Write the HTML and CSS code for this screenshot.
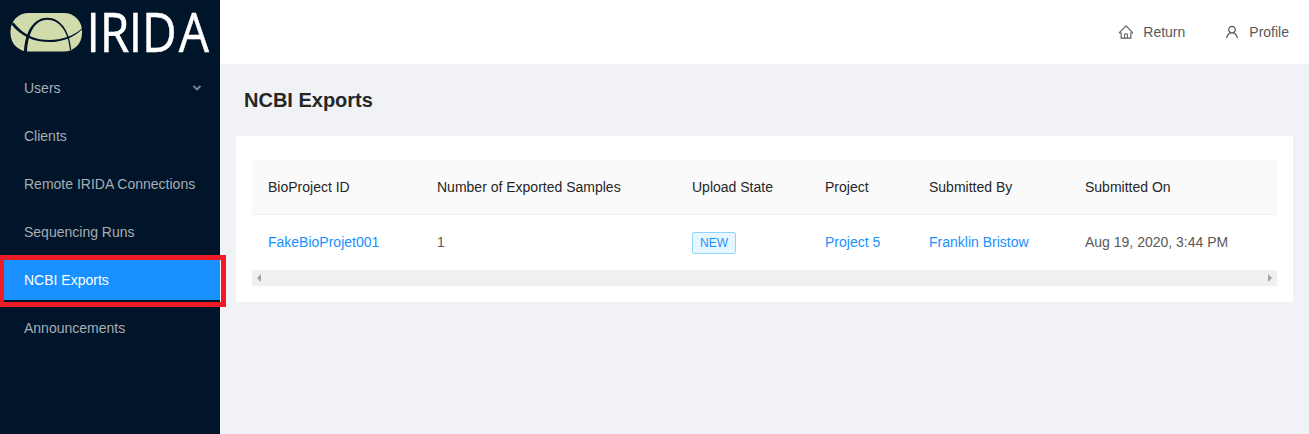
FILE: index.html
```html
<!DOCTYPE html>
<html lang="en">
<head>
<meta charset="utf-8">
<title>NCBI Exports</title>
<link rel="stylesheet" href="styles.css">
</head>
<body>
<div class="layout">
  <aside class="sidebar">
    <svg class="logo" viewBox="0 0 220 64" role="img" aria-label="IRIDA">
      <rect class="logo-badge" x="10.5" y="13" width="71.5" height="38.5" rx="18"/>
      <path class="logo-arc" d="M13.300 22.2C24 35.500 36 40 49.500 40C62 40 73 36 82 28.500L82 29.500C73 37.900 62 42.100 49.500 42.100C34 42.100 21 36.500 11.500 24.500Z"/>
      <path class="logo-arc" d="M24 52C25 31 34 17.800 47.500 17.800C60 17.800 69.500 30 71.200 50L70 50C68.200 31 59 19.800 47.500 19.800C36 19.800 28 31 27 52Z"/>
      <text class="logo-text" transform="scale(.87 1)" y="51.700" x="99.300 114.700 147.900 163.300 205.500">IRIDA</text>
    </svg>
    <nav class="menu">
      <a class="menu-item">Users
        <svg class="chevron" viewBox="0 0 10 10"><path d="M1.500 2.800L5 6.300L8.500 2.800"/></svg>
      </a>
      <a class="menu-item">Clients</a>
      <a class="menu-item">Remote IRIDA Connections</a>
      <a class="menu-item">Sequencing Runs</a>
      <a class="menu-item selected">NCBI Exports<span class="highlight"></span></a>
      <a class="menu-item">Announcements</a>
    </nav>
  </aside>
  <div class="main">
    <header class="topbar">
      <a class="top-link"><svg class="icon" viewBox="0 0 1024 1024"><path d="M946.5 505L560.1 118.8l-25.9-25.9a31.5 31.5 0 00-44.400 0L77.500 505a63.900 63.900 0 00-18.800 46c.4 35.200 29.700 63.300 64.900 63.300h42.500V940h691.800V614.300h43.400c17.100 0 33.200-6.700 45.300-18.800a63.600 63.600 0 0018.700-45.300c0-17-6.700-33.100-18.800-45.200zM568 868H456V664h112v204zm217.900-325.700V868H632V640c0-22.100-17.900-40-40-40H432c-22.100 0-40 17.900-40 40v228H238.100V542.300h-96l370-369.700 23.100 23.100L882 542.300h-96.100z"/></svg>Return</a>
      <a class="top-link"><svg class="icon" viewBox="0 0 1024 1024"><path d="M858.500 763.600a374 374 0 00-80.600-119.500 375.630 375.630 0 00-119.500-80.600c-.4-.2-.8-.3-1.200-.5C719.500 518 760 444.700 760 362c0-137-111-248-248-248S264 225 264 362c0 82.700 40.500 156 102.800 201.100-.4.2-.8.3-1.200.5-44.800 18.900-85 46-119.500 80.600a375.630 375.630 0 00-80.600 119.500A371.700 371.700 0 00136 901.800a8 8 0 008 8.200h60c4.400 0 7.900-3.500 8-7.800 2-77.200 33-149.500 87.800-204.300 56.700-56.700 132-87.900 212.200-87.900s155.500 31.200 212.200 87.900C779 752.700 810 825 812 902.200c.1 4.400 3.600 7.800 8 7.800h60a8 8 0 008-8.200c-1-47.800-10.900-94.300-29.500-138.200zM512 534c-45.900 0-89.100-17.900-121.600-50.400S340 407.900 340 362c0-45.900 17.900-89.100 50.400-121.600S466.100 190 512 190s89.100 17.900 121.600 50.400S684 316.100 684 362c0 45.900-17.900 89.100-50.400 121.600S557.900 534 512 534z"/></svg>Profile</a>
    </header>
    <h1 class="page-title">NCBI Exports</h1>
    <section class="card">
      <div class="row head">
        <div>BioProject ID</div><div>Number of Exported Samples</div><div>Upload State</div><div>Project</div><div>Submitted By</div><div>Submitted On</div>
      </div>
      <div class="row body-row">
        <div><a class="link">FakeBioProjet001</a></div><div>1</div><div><span class="tag">NEW</span></div><div><a class="link">Project 5</a></div><div><a class="link">Franklin Bristow</a></div><div>Aug 19, 2020, 3:44 PM</div>
      </div>
      <div class="scrollbar">
        <svg class="arrow" viewBox="0 0 4 8"><path d="M4 0V8L0 4Z"/></svg>
        <svg class="arrow" viewBox="0 0 4 8"><path d="M0 0V8L4 4Z"/></svg>
      </div>
    </section>
  </div>
</div>
</body>
</html>
```
FILE: styles.css
```css
* { box-sizing: border-box; }
body {
  margin: 0;
  font: 14px/22px "Liberation Sans", Arial, sans-serif;
  color: #595959;
  background: #f0f2f5;
  overflow: hidden;
}
.layout { display: flex; height: 434px; }
.sidebar { width: 220px; flex: none; background: #001529; }
.logo { display: block; width: 220px; height: 64px; }
.logo-badge { fill: #d1dbab; }
.logo-arc { fill: #001529; }
.logo-text { font: 55px "Open Sans", sans-serif; fill: #fff; stroke: #fff; stroke-width: .5; }
.menu { display: flex; flex-direction: column; gap: 8px; padding-top: 4px; }
.menu-item {
  position: relative;
  display: flex;
  align-items: center;
  justify-content: space-between;
  height: 40px;
  padding: 0 18px 0 24px;
  color: #a6adb4;
}
.selected { background: #1890ff; color: #fff; }
.highlight {
  position: absolute;
  z-index: 1;
  left: -1px;
  top: -5px;
  width: 227px;
  height: 52px;
  border: 5px solid #ed1c24;
}
.chevron { width: 10px; height: 10px; fill: none; stroke: #7f8993; stroke-width: 1.9; }
.main { flex: 1; min-width: 0; }
.topbar {
  display: flex;
  justify-content: flex-end;
  align-items: center;
  gap: 39px;
  height: 64px;
  padding-right: 20px;
  background: #fff;
}
.top-link { display: flex; align-items: center; gap: 9px; }
.icon { width: 16px; height: 16px; fill: #595959; }
.page-title {
  margin: 0;
  padding: 20px 24px;
  height: 72px;
  font-size: 20px;
  line-height: 32px;
  color: #262626;
}
.card { margin: 0 16px; padding: 24px 16px 16px; background: #fff; }
.row {
  display: grid;
  grid-template-columns: 169px 255px 133px 104px 156px 192px;
  align-items: center;
  height: 55px;
  padding-left: 16px;
  white-space: nowrap;
}
.head { background: #fafafa; border-bottom: 1px solid #f0f0f0; color: #262626; }
.body-row { align-items: start; padding-top: 16px; }
.link { color: #1890ff; }
.tag {
  display: block;
  width: 44px;
  height: 22px;
  margin-top: 1px;
  border: 1px solid #91d5ff;
  border-radius: 2px;
  background: #e6f7ff;
  color: #1890ff;
  font-size: 12px;
  line-height: 20px;
  text-align: center;
}
.scrollbar {
  display: flex;
  justify-content: space-between;
  align-items: center;
  height: 16px;
  padding: 0 5px;
  background: #f0f0f0;
}
.arrow { width: 4px; height: 8px; fill: #a3a3a3; }
```
